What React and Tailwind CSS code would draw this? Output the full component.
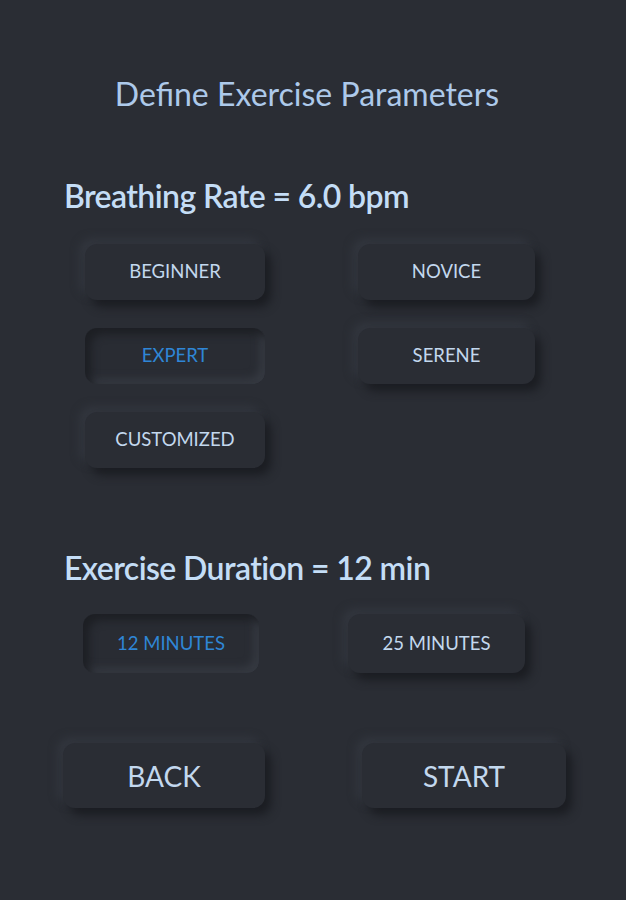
import React, { useState } from 'react';

const raised =
  'shadow-[6px_7px_10px_#1b1d22,-5px_-5px_10px_#33373f] bg-[#2a2d34]';
const inset =
  'shadow-[inset_6px_6px_9px_#1d1f24,inset_-5px_-5px_9px_#363a42] bg-[#292c33]';

const Pill = ({ label, active, onClick, className = '', text = 'text-[18.5px]' }) => (
  <button
    onClick={onClick}
    className={`flex items-center justify-center rounded-[12px] ${text} ${
      active ? inset + ' text-[#2f86d6]' : raised + ' text-[#c3d8ee]'
    } ${className}`}
  >
    {label}
  </button>
);

const App = () => {
  const [level, setLevel] = useState('EXPERT');
  const [duration, setDuration] = useState(12);

  return (
    <div
      className="w-full min-h-[900px] bg-[#2a2d34] pt-[73px]"
      style={{ fontFamily: 'Lato, "Open Sans", sans-serif' }}
    >
      <h1 className="text-center text-[32px] leading-[42px] text-[#adc9ea] pr-[12px]">
        Define Exercise Parameters
      </h1>

      {/* Breathing rate */}
      <h2 className="mt-[60px] ml-[64px] text-[32px] leading-[42px] font-semibold tracking-[-0.6px] text-[#c4ddf6]">
        Breathing Rate = 6.0 bpm
      </h2>

      <div className="mt-[27px] ml-[85px] grid grid-cols-[180px_177px] gap-x-[93px] gap-y-[28px]">
        {['BEGINNER', 'NOVICE', 'EXPERT', 'SERENE', 'CUSTOMIZED'].map((l) => (
          <Pill
            key={l}
            label={l}
            active={level === l}
            onClick={() => setLevel(l)}
            className="h-[56px]"
          />
        ))}
      </div>

      {/* Duration */}
      <h2 className="mt-[79px] ml-[64px] text-[32px] leading-[42px] font-semibold tracking-[-0.6px] text-[#c4ddf6]">
        Exercise Duration = {duration} min
      </h2>

      <div className="mt-[25px] ml-[83px] flex gap-[89px]">
        <Pill
          label="12 MINUTES"
          active={duration === 12}
          onClick={() => setDuration(12)}
          className="w-[176px] h-[59px]"
        />
        <Pill
          label="25 MINUTES"
          active={duration === 25}
          onClick={() => setDuration(25)}
          className="w-[177px] h-[59px]"
        />
      </div>

      {/* Actions */}
      <div className="mt-[70px] ml-[63px] flex gap-[97px]">
        <Pill label="BACK" className="w-[202px] h-[65px]" text="text-[28px]" />
        <Pill label="START" className="w-[204px] h-[65px]" text="text-[28px]" />
      </div>
    </div>
  );
};

export default App;
